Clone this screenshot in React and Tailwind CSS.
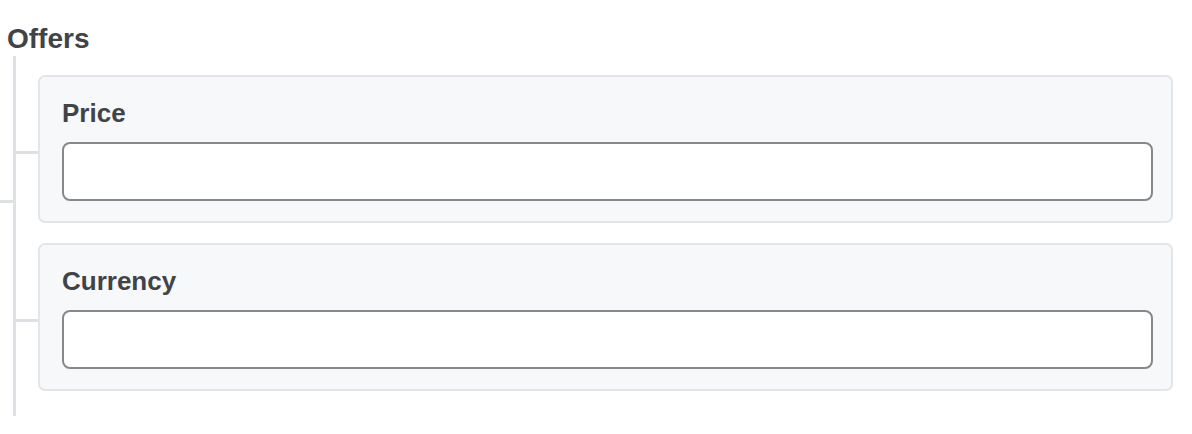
import React from 'react'

const fields = ['Price', 'Currency']

function Field({ label }) {
  return (
    <div className="relative rounded-[7px] border-2 border-[#e2e5e9] bg-[#f7f8fa] pl-[22px] pr-[18px] pt-[20px] pb-[20px]">
      {/* tree connector */}
      <div className="absolute left-[-24px] top-[74px] h-[3px] w-[22px] bg-[#dde1e6]" />
      <label className="block text-[26px] leading-[32px] font-bold text-[#404347]">{label}</label>
      <input
        type="text"
        className="mt-[13px] block h-[59px] w-full rounded-[8px] border-2 border-[#85888d] bg-white px-3 outline-none"
      />
    </div>
  )
}

export default function App() {
  return (
    <div
      className="relative h-[434px] w-[1192px] overflow-hidden bg-white pl-[7px] pt-[22px]"
      style={{ fontFamily: '"Liberation Sans", Arial, sans-serif' }}
    >
      {/* stub from parent tree */}
      <div className="absolute left-0 top-[200px] h-[3px] w-[13px] bg-[#dde1e6]" />

      <h2 className="text-[28px] leading-[34px] font-bold text-[#404347]">Offers</h2>

      <div className="ml-[6px] w-[1160px] border-l-[3px] border-[#dde1e6] pl-[22px] pt-[19px] pb-[25px]">
        <div className="flex flex-col gap-[20px]">
          {fields.map((f) => (
            <Field key={f} label={f} />
          ))}
        </div>
      </div>
    </div>
  )
}
